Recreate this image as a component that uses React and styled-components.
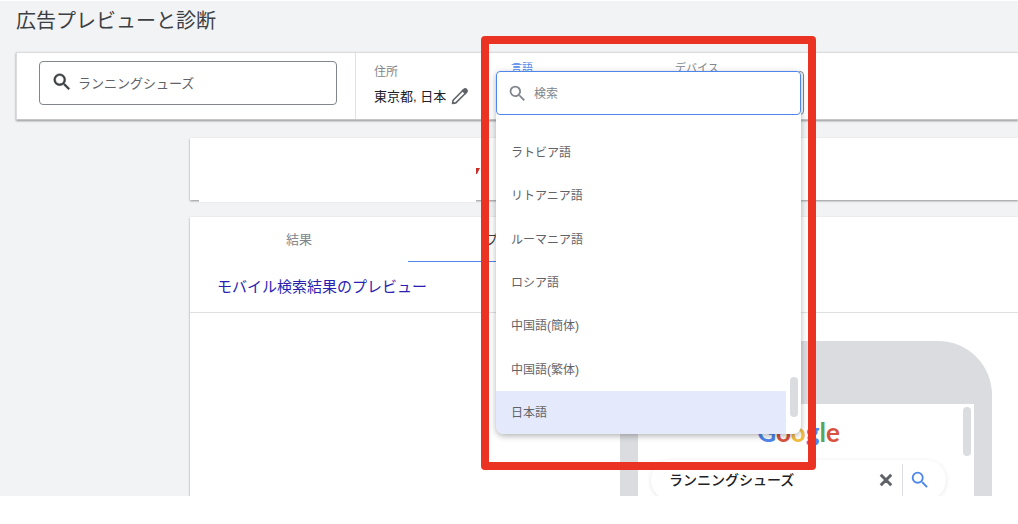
import React from "react";
import styled, { createGlobalStyle } from "styled-components";
import { MdSearch, MdClose } from "react-icons/md";

const Global = createGlobalStyle`
  * { box-sizing: border-box; }
  body {
    margin: 0;
    background: #fff;
    color: #3c4043;
    font-family: "Liberation Sans", "Noto Sans CJK JP", sans-serif;
    font-size: 12px;
    overflow-x: hidden;
  }
  button, input { font-family: inherit; }
`;

const Page = styled.main`
  margin-top: 1px;
  padding-left: 16px;
  background: #f1f3f4;
  overflow: hidden;
`;

const Title = styled.h1`
  margin: 0;
  padding: 6px 0 17px;
  font-size: 20px;
  font-weight: 400;
  line-height: 28px;
`;

const Toolbar = styled.section`
  position: relative;
  z-index: 2;
  display: flex;
  height: 68px;
  background: #fff;
  border: 1px solid #dadce0;
  border-right: 0;
  border-bottom-color: #c4c6c8;
  box-shadow: 0 1px 2px rgba(0, 0, 0, 0.4);
`;

const QueryCell = styled.div`
  padding: 8px 18px 0 22px;
  border-right: 1px solid #dfe1e5;
`;

const QueryBox = styled.label`
  display: flex;
  align-items: center;
  gap: 5px;
  width: 298px;
  height: 44px;
  padding: 0 0 2px 11px;
  border: 1px solid #80868b;
  border-radius: 4px;
  color: #3c4043;

  svg path:last-child {
    stroke: currentColor;
    stroke-width: 0.5;
  }
`;

const TextInput = styled.input`
  flex: 1;
  min-width: 0;
  padding: 0;
  border: 0;
  outline: 0;
  background: transparent;
  color: #5f6368;
  font-size: ${(p) => p.$size || 12}px;
  &::placeholder { color: #80868b; opacity: 1; }
`;

const AddressCell = styled.div`
  width: 140px;
  padding: 10px 0 0 18px;
`;

const FieldLabel = styled.div`
  color: #80868b;
  line-height: 18px;
`;

const AddressValue = styled.div`
  display: flex;
  align-items: center;
  gap: 5px;
  color: #202124;
  font-size: 13px;
  line-height: 32px;
  white-space: nowrap;
`;

const IconButton = styled.button`
  display: flex;
  padding: 0;
  border: 0;
  background: none;
  color: ${(p) => p.$color || "#5f6368"};
`;

const ClearButton = styled(IconButton)`
  svg path:last-child {
    stroke: currentColor;
    stroke-width: 2;
  }
`;

const TargetCell = styled.div`
  position: relative;
  width: 308px;
  padding-top: 8px;
`;

const TargetLabels = styled.div`
  display: grid;
  grid-template-columns: 164px 1fr;
  padding-left: 15px;
  font-size: 11px;
  line-height: 14px;
`;

const TargetLabel = styled.span`
  color: ${(p) => (p.$active ? "#4f86ec" : "#80868b")};
`;

const DeviceButton = styled.button`
  position: absolute;
  top: 18px;
  right: 0;
  width: 144px;
  height: 44px;
  border: 1px solid #80868b;
  border-radius: 4px;
  background: #fff;
`;

const Menu = styled.div`
  position: absolute;
  top: 18px;
  left: 0;
  width: 305px;
  background: #fff;
  border-radius: 4px 4px 8px 8px;
  box-shadow: 0 2px 6px rgba(0, 0, 0, 0.3);
`;

const MenuSearch = styled.label`
  display: flex;
  align-items: center;
  gap: 6px;
  height: 44px;
  padding: 1px 0 0 10px;
  border: 1px solid #4f86ec;
  border-radius: 4px;
  color: #80868b;
`;

const Options = styled.ul`
  display: grid;
  grid-auto-rows: 1fr;
  height: 319px;
  margin: 0;
  padding: 15px 15px 0 0;
  list-style: none;
`;

const Option = styled.li`
  display: flex;
  align-items: center;
  padding: 0 0 1px 15px;
  color: #5f6368;
  background: ${(p) => (p.$selected ? "#e4e9fc" : "transparent")};
  border-bottom-left-radius: ${(p) => (p.$selected ? 8 : 0)}px;
`;

const Thumb = styled.span`
  position: absolute;
  right: ${(p) => p.$right}px;
  top: ${(p) => p.$top}px;
  width: 8px;
  height: ${(p) => p.$length}px;
  border-radius: 4px;
  background: #dadce0;
`;

const Highlight = styled.div`
  position: absolute;
  top: -17px;
  left: -15px;
  width: 335px;
  height: 434px;
  border: 8px solid #ea3323;
  border-radius: 4px;
  pointer-events: none;
`;

const Card = styled.section`
  margin: ${(p) => p.$gap}px 0 0 174px;
  background: #fff;
  box-shadow: 0 1px 2px rgba(0, 0, 0, 0.4);
`;

const Notice = styled.div`
  display: flex;
  align-items: flex-start;
  height: 62px;
  padding-left: 9px;
`;

const NoticeBody = styled.div`
  width: 277px;
  height: 64px;
  background: #fff;
`;

const NoticeMark = styled.svg`
  margin-top: 30px;
`;

const Tabs = styled.nav`
  display: flex;
  height: 45px;
`;

const Tab = styled.button`
  width: 218px;
  padding: ${(p) => (p.$active ? "0 0 2px 77px" : "0 0 2px")};
  border: 0;
  border-bottom: 1px solid ${(p) => (p.$active ? "#4f86ec" : "transparent")};
  background: none;
  color: ${(p) => (p.$active ? "#3c4043" : "#80868b")};
  font-size: 13px;
  text-align: ${(p) => (p.$active ? "left" : "center")};
`;

const PreviewTitle = styled.h2`
  margin: 0;
  padding-left: 27px;
  border-bottom: 1px solid #e0e0e0;
  color: #2a1fb0;
  font-size: 15px;
  font-weight: 400;
  line-height: 50px;
`;

const PreviewArea = styled.div`
  height: 183px;
  padding: 28px 0 0 430px;
  overflow: hidden;
`;

const Phone = styled.div`
  width: 372px;
  height: 600px;
  padding: 63px 18px;
  border-radius: 54px;
  background: #dadce0;
`;

const Screen = styled.div`
  position: relative;
  height: 100%;
  padding: 11px 28px 0 13px;
  background: #fff;
`;

const Logo = styled.div`
  font-family: Lato, sans-serif;
  font-size: 26px;
  font-weight: 700;
  line-height: 34px;
  text-align: center;
`;

const Letter = styled.span`
  color: ${(p) => p.$color};
`;

const SearchBar = styled.div`
  display: flex;
  align-items: center;
  height: 40px;
  margin-top: 11px;
  padding-left: 18px;
  border-radius: 20px;
  box-shadow: 0 1px 5px rgba(0, 0, 0, 0.1);
`;

const SearchTerm = styled.span`
  flex: 1;
  padding-bottom: 2px;
  color: #202124;
  font-size: 14px;
  font-weight: 500;
`;

const SearchAction = styled.div`
  display: flex;
  align-items: center;
  height: 32px;
  margin-left: 7px;
  padding: 0 15px 0 6px;
  border-left: 1px solid #dadce0;
`;

const languages = [
  "ラトビア語",
  "リトアニア語",
  "ルーマニア語",
  "ロシア語",
  "中国語(簡体)",
  "中国語(繁体)",
  "日本語",
];

const logoLetters = [
  ["G", "#4f86ec"],
  ["o", "#d95140"],
  ["o", "#f2bd42"],
  ["g", "#4f86ec"],
  ["l", "#58a55c"],
  ["e", "#d95140"],
];

function Pencil() {
  return (
    <svg width="18" height="20" viewBox="0 0 18 20" aria-hidden="true">
      <path
        d="M1.600 16.400l.5-3.200L12.300 3a1.900 1.900 0 0 1 2.700 0a1.900 1.900 0 0 1 0 2.700L4.800 15.900z"
        fill="none"
        stroke="currentColor"
        strokeWidth="1.6"
        strokeLinejoin="round"
      />
      <path
        d="M10.500 3.700l2-2a2.700 2.700 0 0 1 3.800 3.800l-2 2z"
        fill="currentColor"
      />
    </svg>
  );
}

function LanguageMenu() {
  return (
    <Menu>
      <MenuSearch>
        <MdSearch size={21} aria-hidden="true" />
        <TextInput placeholder="検索" aria-label="検索" />
      </MenuSearch>
      <Options role="listbox" aria-labelledby="language-label">
        {languages.map((name) => (
          <Option
            key={name}
            role="option"
            aria-selected={name === "日本語"}
            $selected={name === "日本語"}
          >
            {name}
          </Option>
        ))}
      </Options>
      <Thumb $right={3} $top={306} $length={40} />
    </Menu>
  );
}

export default function App() {
  return (
    <>
      <Global />
      <Page>
        <Title>広告プレビューと診断</Title>
        <Toolbar>
          <QueryCell>
            <QueryBox>
              <MdSearch size={22} aria-hidden="true" />
              <TextInput
                $size={13}
                defaultValue="ランニングシューズ"
                aria-label="検索語句"
              />
            </QueryBox>
          </QueryCell>
          <AddressCell>
            <FieldLabel>住所</FieldLabel>
            <AddressValue>
              東京都, 日本
              <IconButton aria-label="住所を編集">
                <Pencil />
              </IconButton>
            </AddressValue>
          </AddressCell>
          <TargetCell>
            <TargetLabels>
              <TargetLabel id="language-label" $active>言語</TargetLabel>
              <TargetLabel id="device-label">デバイス</TargetLabel>
            </TargetLabels>
            <DeviceButton aria-labelledby="device-label" />
            <LanguageMenu />
            <Highlight />
          </TargetCell>
        </Toolbar>
        <Card $gap={18}>
          <Notice>
            <NoticeBody />
            <NoticeMark width="4" height="7" viewBox="0 0 4 7" aria-hidden="true">
              <path d="M0 0h4L1 6H0z" fill="#c5302b" />
            </NoticeMark>
          </Notice>
        </Card>
        <Card $gap={17}>
          <Tabs>
            <Tab>結果</Tab>
            <Tab $active aria-label="プレビュー">プ</Tab>
          </Tabs>
          <PreviewTitle>モバイル検索結果のプレビュー</PreviewTitle>
          <PreviewArea>
            <Phone>
              <Screen>
                <Logo>
                  {logoLetters.map(([letter, color], i) => (
                    <Letter key={i} $color={color}>{letter}</Letter>
                  ))}
                </Logo>
                <SearchBar>
                  <SearchTerm>ランニングシューズ</SearchTerm>
                  <ClearButton aria-label="クリア">
                    <MdClose size={18} />
                  </ClearButton>
                  <SearchAction>
                    <IconButton aria-label="検索" $color="#4f86ec">
                      <MdSearch size={22} />
                    </IconButton>
                  </SearchAction>
                </SearchBar>
                <Thumb $right={3} $top={3} $length={49} />
              </Screen>
            </Phone>
          </PreviewArea>
        </Card>
      </Page>
    </>
  );
}
